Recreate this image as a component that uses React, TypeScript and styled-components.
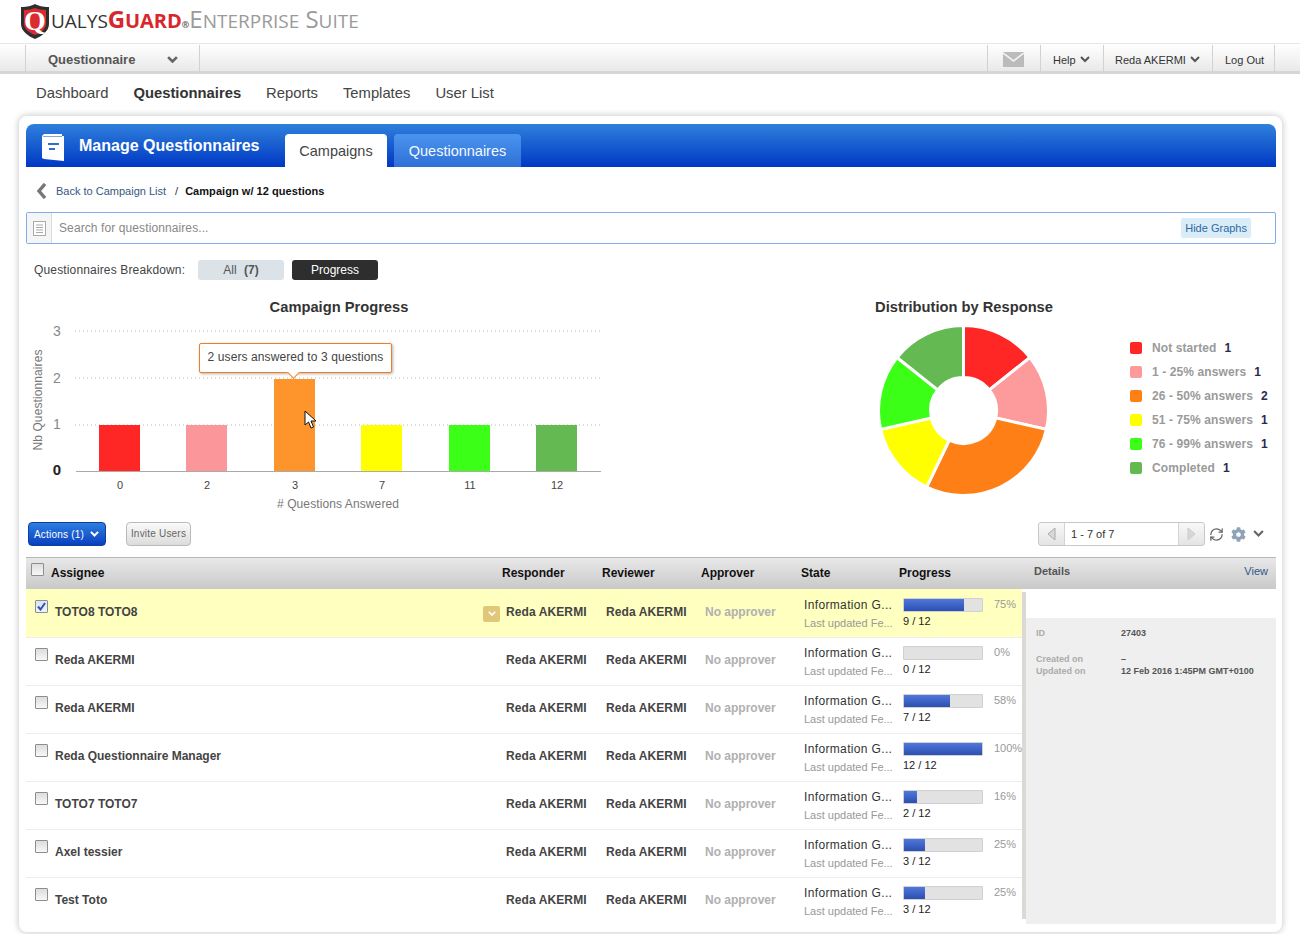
import React from "react";
import styled, { createGlobalStyle } from "styled-components";
import { RefreshCw } from "lucide-react";
import { FaCog } from "react-icons/fa";

const Global = createGlobalStyle`
  html, body { margin: 0; padding: 0; background: #fff; overflow: hidden; }
  body { font-family: "Liberation Sans", Arial, sans-serif; color: #333; }
  * { box-sizing: border-box; }
`;

const Page = styled.div`width: 1300px; height: 934px; overflow: hidden; background: #fff;`;

const LogoBar = styled.header`
  height: 44px; padding: 4px 0 0 20px; display: flex; align-items: flex-start; border-bottom: 1px solid #e6e6e6;
`;
const LogoText = styled.div`
  margin: 2px 0 0 1px; display: flex; align-items: baseline; font-family: "Open Sans", sans-serif; line-height: 26px; white-space: nowrap;
`;
const LogoPart = styled.span<{ $size: number; $color: string; $bold?: boolean; $spacing?: number }>`
  font-size: ${p => p.$size}px; color: ${p => p.$color}; font-weight: ${p => (p.$bold ? 700 : 400)};
  letter-spacing: ${p => p.$spacing ?? 0}px;
`;

const TopNav = styled.nav`
  height: 30px; padding: 0 25px 0 25px; display: flex; justify-content: space-between;
  background: linear-gradient(#ffffff, #e9e9e9); border-bottom: 3px solid #d5d6da;
`;
const NavGroup = styled.div`display: flex; height: 27px; margin-top: 1px;`;
const NavCell = styled.div<{ $w: number; $pad?: number; $last?: boolean }>`
  width: ${p => p.$w}px; padding: 2px 0 0 ${p => p.$pad ?? 12}px; display: flex; align-items: center; gap: 4px;
  border-left: 1px solid #d2d2d2; border-right: ${p => (p.$last ? "1px solid #d2d2d2" : "none")};
  font-size: 11px; color: #333; white-space: nowrap;
`;
const ModuleName = styled.span`font-size: 13px; font-weight: 700; color: #555; width: 115px;`;

const SubNav = styled.div`
  height: 41px; padding: 9px 0 0 36px; display: flex; gap: 25px; font-size: 14.8px; line-height: 20px; color: #444;
`;
const SubLink = styled.span<{ $active?: boolean }>`
  font-weight: ${p => (p.$active ? 700 : 400)}; color: ${p => (p.$active ? "#333" : "#444")};
`;

const Card = styled.main`
  margin: 1px 0 0 19px; width: 1263px; height: 816px; padding: 8px 6px 0 7px; background: #fff;
  border-radius: 8px; box-shadow: 0 0 6px 1px rgba(0,0,0,.2);
`;
const AppHeader = styled.div`
  height: 43px; border-radius: 8px 8px 0 0; background: linear-gradient(#2f80dc, #0038c4);
  display: flex; align-items: flex-start; padding-left: 16px;
`;
const AppTitle = styled.h1`
  margin: 13px 26px 0 15px; font-size: 16px; line-height: 18px; font-weight: 700; color: #fff; width: 180px; white-space: nowrap;
`;
const Tab = styled.div<{ $active?: boolean; $w: number }>`
  margin: 10px 7px 0 0; height: 33px; width: ${p => p.$w}px; border-radius: 4px 4px 0 0; text-align: center; font-size: 14.5px; line-height: 34px;
  background: ${p => (p.$active ? "#fff" : "linear-gradient(#4a94ee, #2f70d8)")}; color: ${p => (p.$active ? "#444" : "#f4f8ff")};
`;

const Crumbs = styled.div`height: 45px; padding: 17px 0 0 10px; display: flex; align-items: flex-start; font-size: 11px; line-height: 14px;`;
const BackLink = styled.span`color: #36587f; margin: 0 9px 0 9px;`;
const Slash = styled.span`color: #333; margin-right: 7px;`;
const CrumbNow = styled.span`font-weight: 700; color: #111; letter-spacing: .05px;`;

const SearchBox = styled.div`
  height: 32px; display: flex; align-items: stretch; border: 1px solid #84abe6; border-radius: 2px; position: relative;
`;
const SearchIcon = styled.div`width: 25px; background: #f5f5f5; border-right: 1px solid #dcdcdc; display: flex; align-items: center; justify-content: center;`;
const SearchInput = styled.div`flex: 1; padding-left: 7px; font-size: 12px; line-height: 30px; color: #888; letter-spacing: .1px;`;
const HideBtn = styled.div`
  margin: 5px 24px 0 0; height: 20px; padding: 0 4px; border-radius: 2px; background: #d9ecf8; color: #2c6aa8; font-size: 11px; line-height: 21px;
`;

const Breakdown = styled.div`margin-top: 16px; height: 20px; padding-left: 8px; display: flex; align-items: center; font-size: 12px; color: #444;`;
const BreakLabel = styled.span`width: 164px; letter-spacing: .15px; white-space: nowrap;`;
const Pill = styled.div<{ $dark?: boolean }>`
  width: 86px; height: 20px; margin-right: 8px; border-radius: 3px; text-align: center; line-height: 20px; font-size: 12px;
  background: ${p => (p.$dark ? "#2e2e2e" : "#dbe2e8")}; color: ${p => (p.$dark ? "#fff" : "#555")};
`;
const PillCount = styled.b`margin-left: 4px;`;

const Charts = styled.section`margin-top: 17px; height: 218px; display: flex;`;
const ChartPanel = styled.div<{ $w: number }>`width: ${p => p.$w}px; position: relative;`;
const ChartTitle = styled.h2`margin: 0; height: 20px; font-size: 14.7px; line-height: 20px; font-weight: 700; color: #333; text-align: center; white-space: nowrap;`;
const ChartSvg = styled.svg`display: block;`;
const Gap = styled.div`width: 212px;`;
const Tooltip = styled.div`
  position: absolute; left: 173px; top: 46px; width: 193px; height: 30px; background: #fff; border: 1px solid #f47b20; border-radius: 2px;
  box-shadow: 1px 1px 3px rgba(0,0,0,.3); font-size: 12px; line-height: 26px; text-align: center; color: #444; letter-spacing: .1px;
  &::after {
    content: ""; position: absolute; left: 89px; bottom: -5px; width: 8px; height: 8px; background: #fff;
    border-right: 1px solid #f47b20; border-bottom: 1px solid #f47b20; transform: rotate(45deg);
  }
`;
const CursorMark = styled.svg`position: absolute; left: 278px; top: 113px;`;
const Legend = styled.ul`list-style: none; margin: 42px 0 0 66px; padding: 0; display: flex; flex-direction: column; gap: 6px;`;
const LegendRow = styled.li`display: flex; align-items: center; height: 18px; font-size: 12px; font-weight: 700; white-space: nowrap;`;
const Swatch = styled.i<{ $c: string }>`width: 12px; height: 12px; margin-right: 10px; border-radius: 2px; background: ${p => p.$c};`;
const LegendText = styled.span`color: #9a9a9a; letter-spacing: .1px;`;
const LegendCount = styled.span`color: #2a2a50; margin-left: 8px;`;

const Toolbar = styled.div`margin-top: 7px; height: 24px; padding-left: 2px; display: flex; align-items: stretch;`;
const ActionsBtn = styled.div`
  width: 78px; border-radius: 4px; border: 1px solid #0f3f9e; background: linear-gradient(#2c7fe0, #0a3fc0); color: #fff; font-size: 10px; letter-spacing: .2px;
  display: flex; align-items: center; padding-left: 5px; gap: 6px; white-space: nowrap;
`;
const InviteBtn = styled.div`
  margin-left: 20px; width: 65px; border-radius: 4px; border: 1px solid #bbb; background: linear-gradient(#fafafa, #dcdcdc); color: #666; font-size: 10px; letter-spacing: .2px;
  text-align: center; line-height: 22px;
`;
const Pager = styled.div`
  margin-left: auto; width: 167px; display: flex; border: 1px solid #c8c8c8; border-radius: 3px; background: linear-gradient(#f8f8f8, #e4e4e4);
`;
const PagerArrow = styled.div<{ $w: number }>`width: ${p => p.$w}px; display: flex; align-items: center; justify-content: center;`;
const PagerValue = styled.div`flex: 1; background: #fff; border-left: 1px solid #d4d4d4; border-right: 1px solid #d4d4d4; font-size: 11px; line-height: 22px; padding-left: 6px; color: #333;`;
const ToolIcons = styled.div`margin: 0 12px 0 4px; display: flex; align-items: center; gap: 7px; color: #666;`;

const TableHead = styled.div`
  margin-top: 11px; height: 32px; display: grid; grid-template-columns: 25px 451px 100px 99px 100px 98px 127px 250px;
  background: linear-gradient(#e8e8e8, #c9c9c9); border-top: 1px solid #b8b8b8; font-size: 12px; font-weight: 700; color: #111; line-height: 14px;
`;
const HeadCell = styled.div`padding-top: 8px; white-space: nowrap;`;
const HeadCheck = styled.div`padding: 5px 0 0 5px;`;
const DetailsHead = styled.div`
  display: flex; justify-content: space-between; padding: 6px 8px 0 8px; font-size: 11px; color: #555;
`;
const ViewLink = styled.span`font-weight: 400; color: #2f5588;`;

const TableBody = styled.div`display: flex; align-items: flex-start;`;
const Rows = styled.div`width: 996px;`;
const Row = styled.div<{ $selected?: boolean }>`
  height: 48px; display: grid; grid-template-columns: 29px 451px 100px 99px 99px 99px 119px;
  background: ${p => (p.$selected ? "#ffffc0" : "#fff")}; border-top: 1px solid ${p => (p.$selected ? "#ffffc0" : "#eee")}; position: relative;
`;
const CheckCell = styled.div`padding: 10px 0 0 9px;`;
const Box = styled.div<{ $checked?: boolean }>`
  width: 13px; height: 13px; border: 1px solid #8e8e8e; border-radius: 1px; background: ${p => (p.$checked ? "linear-gradient(#d8e6f7, #eef3fb)" : "linear-gradient(#ddd, #f8f8f8)")};
  display: flex; align-items: center; justify-content: center;
`;
const NameCell = styled.div`padding-top: 15px; font-size: 12px; line-height: 14px; font-weight: 700; color: #444; position: relative; white-space: nowrap;`;
const PersonCell = styled(NameCell)`letter-spacing: .1px;`;
const RowMenu = styled.div`
  position: absolute; right: 6px; top: 16px; width: 17px; height: 16px; border-radius: 2px; background: #e0c878;
  display: flex; align-items: center; justify-content: center;
`;
const NoApprover = styled(NameCell)`color: #b0b0b0;`;
const StateCell = styled.div`padding-top: 8px;`;
const StateName = styled.div`font-size: 12px; line-height: 15px; color: #333; white-space: nowrap; letter-spacing: .35px;`;
const StateSub = styled.div`margin-top: 4px; font-size: 11px; line-height: 13px; color: #999; white-space: nowrap;`;
const ProgressCell = styled.div`padding-top: 8px; display: grid; grid-template-columns: 91px 28px; grid-template-rows: 14px auto; row-gap: 3px;`;
const Track = styled.div`width: 80px; height: 14px; background: #e2e2e2; border: 1px solid #d0d0d0; border-radius: 1px; overflow: hidden;`;
const Fill = styled.div`height: 100%; margin: -1px 0 0 -1px; box-sizing: content-box; border: 1px solid transparent; background: linear-gradient(#4f78da, #2c4fb0);`;
const Pct = styled.div`font-size: 11px; line-height: 13px; color: #999; white-space: nowrap;`;
const Count = styled.div`grid-column: 1 / 3; font-size: 11px; line-height: 13px; color: #222;`;

const Strip = styled.div`width: 4px; height: 327px; margin-top: 3px; background: #dcd8d3;`;
const DetailsPane = styled.aside`width: 250px; padding-top: 29px;`;
const DetailsBox = styled.div`
  height: 306px; background: #efefef; padding: 9px 10px; display: grid; grid-template-columns: 85px 1fr; grid-auto-rows: 12px; align-content: start;
  font-size: 9px; line-height: 12px; font-weight: 700;
`;
const DLabel = styled.div<{ $top?: number }>`color: #ababab; margin-top: ${p => p.$top ?? 0}px; white-space: nowrap;`;
const DValue = styled.div<{ $top?: number }>`color: #555; margin-top: ${p => p.$top ?? 0}px; white-space: nowrap;`;

const Chevron = ({ w = 10, c = "#666", sw = 2 }: { w?: number; c?: string; sw?: number }) => (
  <svg width={w} height={w * 0.7} viewBox="0 0 10 7">
    <polyline points="1,1 5,5 9,1" fill="none" stroke={c} strokeWidth={sw} />
  </svg>
);

const colors = ["#ff2626", "#fc9a9c", "#ff7f17", "#ffff00", "#3bff17", "#64b952"];
const barColors = ["#ff2626", "#fb979b", "#fe952c", "#ffff00", "#3bff17", "#64b952"];
const bars = [
  { label: "0", x: 99, v: 1 }, { label: "2", x: 186, v: 1 }, { label: "3", x: 274, v: 2 },
  { label: "7", x: 361, v: 1 }, { label: "11", x: 449, v: 1 }, { label: "12", x: 536, v: 1 },
];
const legend = [
  ["Not started", 1], ["1 - 25% answers", 1], ["26 - 50% answers", 2],
  ["51 - 75% answers", 1], ["76 - 99% answers", 1], ["Completed", 1],
] as const;

function arcPath(cx: number, cy: number, r0: number, r1: number, a0: number, a1: number) {
  const pt = (r: number, a: number) => `${(cx + r * Math.sin(a)).toFixed(2)} ${(cy - r * Math.cos(a)).toFixed(2)}`;
  const large = a1 - a0 > Math.PI ? 1 : 0;
  return `M${pt(r1, a0)} A${r1} ${r1} 0 ${large} 1 ${pt(r1, a1)} L${pt(r0, a1)} A${r0} ${r0} 0 ${large} 0 ${pt(r0, a0)} Z`;
}

const rows = [
  { name: "TOTO8 TOTO8", pct: 75, n: 9, selected: true },
  { name: "Reda AKERMI", pct: 0, n: 0 },
  { name: "Reda AKERMI", pct: 58, n: 7 },
  { name: "Reda Questionnaire Manager", pct: 100, n: 12 },
  { name: "TOTO7 TOTO7", pct: 16, n: 2 },
  { name: "Axel tessier", pct: 25, n: 3 },
  { name: "Test Toto", pct: 25, n: 3 },
];

const BarChart = () => (
  <ChartSvg width={626} height={198} viewBox="26 317 626 198">
    {[331, 378, 425].map(y => (
      <line key={y} x1={75} x2={602} y1={y} y2={y} stroke="#bbb" strokeDasharray="1 3" />
    ))}
    {bars.map((b, i) => (
      <rect key={b.label} x={b.x} width={41} y={471 - b.v * 46} height={b.v * 46} fill={barColors[i]} />
    ))}
    <line x1={76} x2={601} y1={471.5} y2={471.5} stroke="#aaa" />
    {[["3", 336], ["2", 383], ["1", 429]].map(([t, y]) => (
      <text key={t} x={57} y={y} textAnchor="middle" fontSize={14} fill="#888" fontFamily="Liberation Sans">{t}</text>
    ))}
    <text x={57} y={475} textAnchor="middle" fontSize={15} fontWeight={700} fill="#222" fontFamily="Liberation Sans">0</text>
    {bars.map(b => (
      <text key={b.label} x={b.x + 21} y={489} textAnchor="middle" fontSize={11} fill="#444" fontFamily="Liberation Sans">{b.label}</text>
    ))}
    <text x={338} y={508} textAnchor="middle" fontSize={12} letterSpacing={0.1} fill="#777" fontFamily="Liberation Sans"># Questions Answered</text>
    <text transform="translate(42 400) rotate(-90)" textAnchor="middle" fontSize={12} letterSpacing={0.1} fill="#777" fontFamily="Liberation Sans">Nb Questionnaires</text>
  </ChartSvg>
);

const Donut = () => {
  const cx = 963.5, cy = 410.5, unit = (Math.PI * 2) / 7;
  let a = 0;
  const vals = [1, 1, 2, 1, 1, 1];
  return (
    <ChartSvg width={200} height={198} viewBox="864 317 200 198">
      {vals.map((v, i) => {
        const d = arcPath(cx, cy, 33, 85, a, a + v * unit);
        a += v * unit;
        return <path key={i} d={d} fill={colors[i]} stroke="#fff" strokeWidth={3} />;
      })}
    </ChartSvg>
  );
};

export default function App() {
  return (
    <Page>
      <Global />
      <LogoBar>
        <svg width="30" height="35" viewBox="0 0 30 35">
          <path d="M1 3 C8 3 11 2 15 0 C19 2 22 3 29 3 L29 20 C29 27 22 32 15 35 C8 32 1 27 1 20 Z" fill="#2e2e2e" />
          <path d="M4 6 C9 6 12 5 15 4 C18 5 21 6 26 6 L26 20 C26 25 20 29 15 31 C10 29 4 25 4 20 Z" fill="#d92b30" />
          <text x="15" y="26" textAnchor="middle" fontSize="28" fontWeight="700" fill="#fff" fontFamily="Liberation Serif">Q</text>
        </svg>
        <LogoText>
          <LogoPart $size={19} $color="#333">UALYS</LogoPart>
          <LogoPart $size={24} $color="#d9262c" $bold $spacing={-0.3}>G</LogoPart>
          <LogoPart $size={20} $color="#d9262c" $bold>UARD</LogoPart>
          <LogoPart $size={9} $color="#555" $bold>®</LogoPart>
          <LogoPart $size={24} $color="#9a9a9a">E</LogoPart>
          <LogoPart $size={19} $color="#9a9a9a">NTERPRISE</LogoPart>
          <LogoPart $size={24} $color="#9a9a9a">&nbsp;S</LogoPart>
          <LogoPart $size={19} $color="#9a9a9a">UITE</LogoPart>
        </LogoText>
      </LogoBar>

      <TopNav>
        <NavGroup>
          <NavCell $w={175} $pad={22} $last>
            <ModuleName>Questionnaire</ModuleName>
            <Chevron w={11} c="#666" sw={2.4} />
          </NavCell>
        </NavGroup>
        <NavGroup>
          <NavCell $w={53} $pad={15}>
            <svg width="21" height="15" viewBox="0 0 21 15">
              <rect width="21" height="15" fill="#bbb" />
              <polyline points="0,1 10.5,9 21,1" fill="none" stroke="#f2f2f2" strokeWidth="1.6" />
            </svg>
          </NavCell>
          <NavCell $w={63}>Help <Chevron w={10} c="#555" sw={2} /></NavCell>
          <NavCell $w={109} $pad={11}>Reda AKERMI <Chevron w={10} c="#555" sw={2} /></NavCell>
          <NavCell $w={63} $last>Log Out</NavCell>
        </NavGroup>
      </TopNav>

      <SubNav>
        <SubLink>Dashboard</SubLink>
        <SubLink $active>Questionnaires</SubLink>
        <SubLink>Reports</SubLink>
        <SubLink>Templates</SubLink>
        <SubLink>User List</SubLink>
      </SubNav>

      <Card>
        <AppHeader>
          <svg width="22" height="27" viewBox="0 0 22 27" style={{ marginTop: 10 }}>
            <path d="M0 2 L2 0 L20 0 L20 2 L22 2 L22 27 L2 25 L0 24 Z" fill="#fff" />
            <rect x="1" y="2" width="19" height="1" fill="#7fa8e0" />
            <rect x="6" y="9" width="11" height="2" fill="#2f6fd0" />
            <rect x="7" y="14" width="6" height="2" fill="#2f6fd0" />
          </svg>
          <AppTitle>Manage Questionnaires</AppTitle>
          <Tab $active $w={102}>Campaigns</Tab>
          <Tab $w={127}>Questionnaires</Tab>
        </AppHeader>

        <Crumbs>
          <svg width="11" height="16" viewBox="0 0 11 16" style={{ marginTop: -1 }}>
            <polyline points="9,1 3,8 9,15" fill="none" stroke="#777" strokeWidth="3.4" />
          </svg>
          <BackLink>Back to Campaign List</BackLink>
          <Slash>/</Slash>
          <CrumbNow>Campaign w/ 12 questions</CrumbNow>
        </Crumbs>

        <SearchBox>
          <SearchIcon>
            <svg width="13" height="15" viewBox="0 0 13 15">
              <rect x=".5" y=".5" width="12" height="14" fill="#fff" stroke="#aaa" />
              <path d="M3 4h7M3 6.5h7M3 9h7M3 11.5h7" stroke="#aaa" />
            </svg>
          </SearchIcon>
          <SearchInput>Search for questionnaires...</SearchInput>
          <HideBtn>Hide Graphs</HideBtn>
        </SearchBox>

        <Breakdown>
          <BreakLabel>Questionnaires Breakdown:</BreakLabel>
          <Pill>All <PillCount>(7)</PillCount></Pill>
          <Pill $dark>Progress</Pill>
        </Breakdown>

        <Charts>
          <ChartPanel $w={626}>
            <ChartTitle>Campaign Progress</ChartTitle>
            <BarChart />
            <Tooltip>2 users answered to 3 questions</Tooltip>
            <CursorMark width="13" height="20" viewBox="0 0 13 20">
              <path d="M1 1 L1 15 L4.5 12 L7 18 L9.5 17 L7 11 L12 11 Z" fill="#fff" stroke="#111" strokeWidth="1" />
            </CursorMark>
          </ChartPanel>
          <Gap />
          <ChartPanel $w={200}>
            <ChartTitle>Distribution by Response</ChartTitle>
            <Donut />
          </ChartPanel>
          <Legend>
            {legend.map(([t, n], i) => (
              <LegendRow key={t}>
                <Swatch $c={colors[i]} />
                <LegendText>{t}</LegendText>
                <LegendCount>{n}</LegendCount>
              </LegendRow>
            ))}
          </Legend>
        </Charts>

        <Toolbar>
          <ActionsBtn>Actions (1) <Chevron w={9} c="#fff" sw={2.2} /></ActionsBtn>
          <InviteBtn>Invite Users</InviteBtn>
          <Pager>
            <PagerArrow $w={25}>
              <svg width="9" height="14" viewBox="0 0 9 14"><path d="M8 1 L1 7 L8 13 Z" fill="#d8d8d8" stroke="#aaa" /></svg>
            </PagerArrow>
            <PagerValue>1 - 7 of 7</PagerValue>
            <PagerArrow $w={25}>
              <svg width="9" height="14" viewBox="0 0 9 14"><path d="M1 1 L8 7 L1 13 Z" fill="#d8d8d8" stroke="#ccc" /></svg>
            </PagerArrow>
          </Pager>
          <ToolIcons>
            <RefreshCw size={15} strokeWidth={2} color="#666" />
            <FaCog size={15} color="#8ea3b8" />
            <Chevron w={11} c="#666" sw={2} />
          </ToolIcons>
        </Toolbar>

        <TableHead>
          <HeadCheck><Box /></HeadCheck>
          <HeadCell>Assignee</HeadCell>
          <HeadCell>Responder</HeadCell>
          <HeadCell>Reviewer</HeadCell>
          <HeadCell>Approver</HeadCell>
          <HeadCell>State</HeadCell>
          <HeadCell>Progress</HeadCell>
          <DetailsHead>
            <span>Details</span>
            <ViewLink>View</ViewLink>
          </DetailsHead>
        </TableHead>

        <TableBody>
          <Rows>
            {rows.map((r, i) => (
              <Row key={i} $selected={r.selected}>
                <CheckCell>
                  <Box $checked={r.selected}>
                    {r.selected && (
                      <svg width="9" height="9" viewBox="0 0 9 9">
                        <polyline points="1,4.5 3.5,7.5 8,1" fill="none" stroke="#3a4fb0" strokeWidth="2" />
                      </svg>
                    )}
                  </Box>
                </CheckCell>
                <NameCell>
                  {r.name}
                  {r.selected && (
                    <RowMenu><Chevron w={8} c="#fff" sw={2} /></RowMenu>
                  )}
                </NameCell>
                <PersonCell>Reda AKERMI</PersonCell>
                <PersonCell>Reda AKERMI</PersonCell>
                <NoApprover>No approver</NoApprover>
                <StateCell>
                  <StateName>Information G...</StateName>
                  <StateSub>Last updated Fe...</StateSub>
                </StateCell>
                <ProgressCell>
                  <Track><Fill style={{ width: `${r.pct}%` }} /></Track>
                  <Pct>{r.pct}%</Pct>
                  <Count>{r.n} / 12</Count>
                </ProgressCell>
              </Row>
            ))}
          </Rows>
          <Strip />
          <DetailsPane>
            <DetailsBox>
              <DLabel>ID</DLabel>
              <DValue>27403</DValue>
              <DLabel $top={14}>Created on</DLabel>
              <DValue $top={14}>–</DValue>
              <DLabel $top={14}>Updated on</DLabel>
              <DValue $top={14}>12 Feb 2016 1:45PM GMT+0100</DValue>
            </DetailsBox>
          </DetailsPane>
        </TableBody>
      </Card>
    </Page>
  );
}
